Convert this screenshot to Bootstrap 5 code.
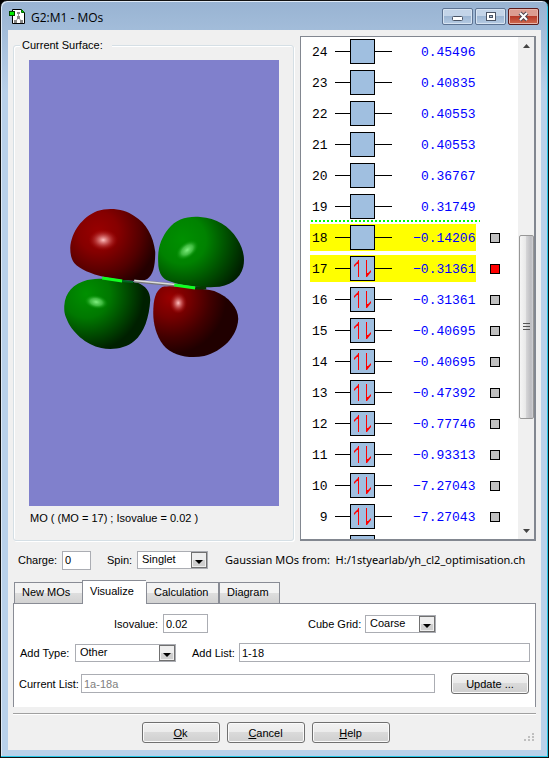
<!DOCTYPE html>
<html lang="en">
<head>
<meta charset="utf-8">
<meta name="viewport" content="width=device-width, initial-scale=1">
<title>G2:M1 - MOs</title>
<link href="https://cdn.jsdelivr.net/npm/bootstrap@5.3.0/dist/css/bootstrap.min.css" rel="stylesheet">
<style>
body{background:#000;font:11px/14px "Liberation Sans",Arial,sans-serif;color:#000;min-height:100vh}
svg{display:block;flex:none}
.win{min-height:100vh;border:1px solid #111;border-radius:7px 7px 0 0;background:linear-gradient(#98b3d2,#b9d1ea 92px);padding:2px 7px 7px;box-shadow:inset -1px -1px #26c6e6,inset 1px 1px #dfeaf6}
.titlebar{height:27px;padding:0 2px 0 1px}
.segoe{font:11px/16px "Noto Sans","Open Sans",sans-serif}
.wtitle{font:12px/16px "Open Sans","Noto Sans",sans-serif;padding:2px 0 0 5px}
.caps{gap:2px}
.cap{width:31px;height:17px;padding:0;border:1px solid #5d7392;border-radius:2px;background:linear-gradient(#c3d4e8 45%,#9db6d3 50%,#b5cbe3);box-shadow:inset 0 0 0 1px #d7e4f2}
.cap.close-x{border-color:#5c1a1a;background:linear-gradient(#dc9c90 45%,#b83a28 50%,#cf6a50);box-shadow:inset 0 0 0 1px #e8b5ab}
.client{background:#f0f0f0;padding:6px 5px 7px}
.upper{gap:6px}
.surface{flex:0 1 282px;border:1px solid #d5dfe5;border-radius:3px;box-shadow:inset 1px 1px #fff,1px 1px #fff;margin-top:2px;padding:0 14px 13px 15px;min-width:0}
.surface legend{float:none;width:auto;font-size:11px;line-height:14px;margin:-7px 0 8px -9px;padding:0 9px 0 2px;background:#f0f0f0}
.view{background:#8080cc;height:446px}
.view svg{width:100%;height:100%}
.caption{margin:5px 0 0 1px}
.levels{flex:1 1 236px;height:505px;border:2px solid #828790;border-width:1px 2px 2px 1px;background:#fff;overflow:hidden}
.rows{padding-left:9px;margin-top:-1px}
.mo{height:31px}
.mo>div{width:166px;height:27px;font:13px/27px "Liberation Mono",monospace}
.mo .num{width:17px;text-align:right;margin-right:8px;padding-top:1px}
.mo .val{color:#00f;text-align:right;flex:1;padding:1px 1px 0 0}
.mo.sel>div{background:#ff0}
.mo button{width:10px;height:10px;padding:0;border:1px solid #000;border-radius:0;background:#c0c0c0;margin-left:14px}
.mo button.on{background:red}
.homo{width:169px;height:2px;margin:-2px 0 0 1px;background:repeating-linear-gradient(90deg,#0f0 0 2px,#fff 2px 4px)}
.sbar{width:16px;background:#f0f0f0;padding:7px 0 6px}
.thumb{height:184px;width:15px;border:1px solid #979797;border-radius:2px;background:linear-gradient(90deg,#f5f5f5,#e9e9e9 42%,#d4d4d6 50%,#bcbcc0 85%,#d0d0d4);margin-top:187px}
.line-in{border:1px solid #abadb3;background:#fff;font-size:11px;line-height:14px;height:19px;padding:0 2px;border-radius:0;color:#000;min-width:0}
.line-in:disabled{color:#808080}
.pick{height:18px;appearance:none;padding:0 18px 2px 4px;background:#fff url("data:image/svg+xml,%3Csvg xmlns='http://www.w3.org/2000/svg' width='16' height='16'%3E%3Crect x='.5' y='.5' width='15' height='15' fill='%23eeeeee' stroke='%23707070'/%3E%3Cpath d='M2 8h12v6H2z' fill='%23cfcfcf'/%3E%3Cpath d='M4 8h8l-4 4z'/%3E%3C/svg%3E") no-repeat right 0 top 0}
.settings{height:20px;margin-top:9px;padding-left:5px}
.lb-charge{width:44px}.lb-spin{width:30px;margin-left:16px}.lb-iso{width:49px;margin-left:94px}.lb-grid{width:57px;margin-left:100px}
.lb-type{width:55px}.lb-list{width:47px;margin-left:16px}.lb-cur{width:62px}
.w-charge{width:29px}.w-pick{width:71px}.w-iso{width:45px}.w-type{width:101px}
.src{flex:1;min-width:0;margin:0 5px 0 17px}
.tabs{margin:10px 0 -1px 1px;height:24px}
.tabs button{height:22px;font-size:11px;line-height:14px;padding:0 0 2px 7px;text-align:left;border:1px solid #898c95;border-right-width:0;border-radius:0;background:linear-gradient(#f3f3f3 48%,#dedede 50%,#d2d2d2);color:#000}
.tabs button.active{height:24px;background:#fff;border-bottom:0;padding-bottom:3px}
.tabs button:last-child{border-right-width:1px}
.t1{width:68px}.t2{width:64px}.t3{width:73px;border-right:1px solid #898c95!important}.t4{width:61px}
.tabpane{background:#fff;border:1px solid #898c95;border-bottom:0;padding:10px 5px 14px}
.frow{height:19px;padding-left:1px}
.frow+.frow{margin-top:10px}
.frow+.frow.last{margin-top:12px;padding:0 1px 0 0}
.push{height:21px;width:78px;font-size:11px;line-height:14px;padding:0;color:#000;border:1px solid #707070;border-radius:3px;background:linear-gradient(#f2f2f2,#ebebeb 48%,#dadada 50%,#cfcfcf);box-shadow:inset 0 0 0 1px #fafafa}
.rule{height:2px;border-top:1px solid #a0a0a0;background:#fff;margin:6px 0 7px}
.actions{gap:7px;padding-right:18px}
.sizegrip{right:0;bottom:0}
</style>
<script src="https://cdn.jsdelivr.net/npm/bootstrap@5.3.0/dist/js/bootstrap.bundle.min.js"></script>
</head>
<body>
<svg width="0" height="0" class="position-absolute" aria-hidden="true">
 <symbol id="empty" viewBox="0 0 57 25"><path d="M0 12.500h57" stroke="#000"/><rect x="15.500" y=".5" width="24" height="24" fill="#a0bfe0" stroke="#000"/></symbol>
 <symbol id="full" viewBox="0 0 57 25"><use href="#empty"/><path d="M23.500 4v17M31.500 4v17" stroke="red"/><path d="M19 11v-2l4-4h1v3h-2zM36 14v2l-4 5h-1v-4h2z" fill="red"/></symbol>
</svg>
<main class="win d-flex flex-column">
 <header class="titlebar d-flex align-items-center">
  <svg width="17" height="17" viewBox="0 0 17 17"><path d="M3.500 1.500h9l3 3v11h-12z" fill="#fff" stroke="#000"/><path d="M12.500 1.500v3h3" fill="#0d0" stroke="#060"/><path d="M9.500 5v5l-3 3M9.500 10l3 3" fill="none" stroke="#999"/><path d="M8 4h3v2H8zM5 12h3v3H5zM11 12h3v3h-3zM8 8h3v3H8z" fill="#888"/><rect x=".5" y="3.500" width="5" height="4" fill="#0e0" stroke="#040"/></svg>
  <h1 class="wtitle flex-grow-1 m-0">G2:M1 - MOs</h1>
  <div class="caps d-flex">
   <button class="cap" aria-label="Minimize"><svg width="29" height="15"><rect x="9.500" y="7.500" width="10" height="4" rx="1" fill="#fff" stroke="#4b5566"/></svg></button>
   <button class="cap" aria-label="Maximize"><svg width="29" height="15"><rect x="10.500" y="3.500" width="9" height="8" fill="#fff" stroke="#4b5566"/><rect x="13.500" y="6.500" width="3" height="2" fill="#a9bdd6" stroke="#4b5566"/></svg></button>
   <button class="cap close-x" aria-label="Close"><svg width="29" height="15"><path d="M11 4l7 7M18 4l-7 7" stroke="#4b4450" stroke-width="4"/><path d="M11 4l7 7M18 4l-7 7" stroke="#fff" stroke-width="2"/></svg></button>
  </div>
 </header>
 <div class="client flex-grow-1">
  <div class="upper d-flex">
   <fieldset class="surface">
    <legend>Current Surface:</legend>
    <div class="view">
     <svg viewBox="29 60 250 446" role="img" aria-label="Molecular orbital 17">
      <defs>
       <radialGradient id="r1" gradientUnits="userSpaceOnUse" cx="98" cy="232" r="66"><stop offset="0" stop-color="#900"/><stop offset=".3" stop-color="#860000"/><stop offset=".65" stop-color="#520000"/><stop offset=".9" stop-color="#240000"/></radialGradient>
       <radialGradient id="r2" gradientUnits="userSpaceOnUse" cx="170" cy="298" r="66"><stop offset="0" stop-color="#900"/><stop offset=".3" stop-color="#740000"/><stop offset=".6" stop-color="#420000"/><stop offset=".85" stop-color="#200000"/></radialGradient>
       <radialGradient id="g1" gradientUnits="userSpaceOnUse" cx="182" cy="240" r="68"><stop offset="0" stop-color="#009000"/><stop offset=".35" stop-color="#008200"/><stop offset=".65" stop-color="#005000"/><stop offset=".95" stop-color="#002000"/></radialGradient>
       <radialGradient id="g2" gradientUnits="userSpaceOnUse" cx="86" cy="294" r="68"><stop offset="0" stop-color="#009000"/><stop offset=".35" stop-color="#007800"/><stop offset=".6" stop-color="#004c00"/><stop offset=".85" stop-color="#002000"/></radialGradient>
       <radialGradient id="hr"><stop offset="0" stop-color="#ffc0c0"/><stop offset=".4" stop-color="#d06060" stop-opacity=".8"/><stop offset="1" stop-color="#a00000" stop-opacity="0"/></radialGradient>
       <radialGradient id="hg"><stop offset="0" stop-color="#80f080"/><stop offset=".5" stop-color="#50c850" stop-opacity=".8"/><stop offset="1" stop-color="#009000" stop-opacity="0"/></radialGradient>
      </defs>
      <path d="M158 263C157 248 161 238 168 229C176 219 187 216 200 217C216 218 229 226 237 239C243 248 245 258 243 267C240 279 229 287 214 287C196 288 178 285 166 280C161 277 158 271 158 263Z" fill="url(#g1)"/>
      <path d="M70 248C71 232 82 217 97 211C109 207 125 209 134 216C146 223 153 236 155 252C155 266 153 275 147 279C139 283 119 280 104 277C91 274 79 269 74 263C71 259 70 254 70 248Z" fill="url(#r1)"/>
      <path d="M64 306C65 292 73 284 87 280C104 277 126 280 138 283C145 286 150 291 150 300C149 317 144 333 134 341C125 349 111 350 101 348C86 345 71 332 66 318C64 313 64 311 64 306Z" fill="url(#g2)"/>
      <path d="M153 313C153 300 155 291 162 287C174 285 199 288 214 291C229 297 238 308 238 319C237 337 222 351 204 356C190 359 172 356 163 345C156 336 153 324 153 313Z" fill="url(#r2)"/>
      <ellipse cx="103" cy="240" rx="15" ry="11" fill="url(#hr)"/><ellipse cx="178" cy="303" rx="9" ry="11" fill="url(#hr)"/>
      <ellipse cx="187" cy="250" rx="13" ry="8" transform="rotate(-38 187 250)" fill="url(#hg)"/><ellipse cx="96" cy="302" rx="12" ry="7" transform="rotate(10 96 302)" fill="url(#hg)"/>
      <path d="M134 281L175 285" stroke="#777" stroke-width="3"/><path d="M134 280.500L175 284.500" stroke="#ddd" stroke-width="1.500"/>
      <path d="M102 278l20 3" stroke="#1f2" stroke-width="3"/><path d="M122 281l11 1" stroke="#062" stroke-width="2"/><path d="M174 285l21 3" stroke="#1f2" stroke-width="3"/><path d="M195 288h11" stroke="#073800" stroke-width="3"/>
     </svg>
    </div>
    <div class="caption">MO ( (MO = 17) ; Isovalue = 0.02 )</div>
   </fieldset>
   <section class="levels d-flex justify-content-between" aria-label="Orbital levels">
    <div class="rows">
     <div class="mo d-flex align-items-center"><div class="d-flex align-items-center"><span class="num">24</span><svg width="57" height="25"><use href="#empty"/></svg><span class="val">0.45496</span></div></div>
     <div class="mo d-flex align-items-center"><div class="d-flex align-items-center"><span class="num">23</span><svg width="57" height="25"><use href="#empty"/></svg><span class="val">0.40835</span></div></div>
     <div class="mo d-flex align-items-center"><div class="d-flex align-items-center"><span class="num">22</span><svg width="57" height="25"><use href="#empty"/></svg><span class="val">0.40553</span></div></div>
     <div class="mo d-flex align-items-center"><div class="d-flex align-items-center"><span class="num">21</span><svg width="57" height="25"><use href="#empty"/></svg><span class="val">0.40553</span></div></div>
     <div class="mo d-flex align-items-center"><div class="d-flex align-items-center"><span class="num">20</span><svg width="57" height="25"><use href="#empty"/></svg><span class="val">0.36767</span></div></div>
     <div class="mo d-flex align-items-center"><div class="d-flex align-items-center"><span class="num">19</span><svg width="57" height="25"><use href="#empty"/></svg><span class="val">0.31749</span></div></div>
     <div class="homo"></div>
     <div class="mo sel d-flex align-items-center"><div class="d-flex align-items-center"><span class="num">18</span><svg width="57" height="25"><use href="#empty"/></svg><span class="val">−0.14206</span></div><button aria-label="Show surface 18"></button></div>
     <div class="mo sel d-flex align-items-center"><div class="d-flex align-items-center"><span class="num">17</span><svg width="57" height="25"><use href="#full"/></svg><span class="val">−0.31361</span></div><button class="on" aria-label="Show surface 17"></button></div>
     <div class="mo d-flex align-items-center"><div class="d-flex align-items-center"><span class="num">16</span><svg width="57" height="25"><use href="#full"/></svg><span class="val">−0.31361</span></div><button aria-label="Show surface 16"></button></div>
     <div class="mo d-flex align-items-center"><div class="d-flex align-items-center"><span class="num">15</span><svg width="57" height="25"><use href="#full"/></svg><span class="val">−0.40695</span></div><button aria-label="Show surface 15"></button></div>
     <div class="mo d-flex align-items-center"><div class="d-flex align-items-center"><span class="num">14</span><svg width="57" height="25"><use href="#full"/></svg><span class="val">−0.40695</span></div><button aria-label="Show surface 14"></button></div>
     <div class="mo d-flex align-items-center"><div class="d-flex align-items-center"><span class="num">13</span><svg width="57" height="25"><use href="#full"/></svg><span class="val">−0.47392</span></div><button aria-label="Show surface 13"></button></div>
     <div class="mo d-flex align-items-center"><div class="d-flex align-items-center"><span class="num">12</span><svg width="57" height="25"><use href="#full"/></svg><span class="val">−0.77746</span></div><button aria-label="Show surface 12"></button></div>
     <div class="mo d-flex align-items-center"><div class="d-flex align-items-center"><span class="num">11</span><svg width="57" height="25"><use href="#full"/></svg><span class="val">−0.93313</span></div><button aria-label="Show surface 11"></button></div>
     <div class="mo d-flex align-items-center"><div class="d-flex align-items-center"><span class="num">10</span><svg width="57" height="25"><use href="#full"/></svg><span class="val">−7.27043</span></div><button aria-label="Show surface 10"></button></div>
     <div class="mo d-flex align-items-center"><div class="d-flex align-items-center"><span class="num">9</span><svg width="57" height="25"><use href="#full"/></svg><span class="val">−7.27043</span></div><button aria-label="Show surface 9"></button></div>
     <div class="mo d-flex align-items-center"><div class="d-flex align-items-center"><span class="num"></span><svg width="57" height="25"><use href="#full"/></svg></div></div>
    </div>
    <div class="sbar d-flex flex-column align-items-center">
     <svg width="7" height="4"><path d="M0 4h7L3.500 0z" fill="#444"/></svg>
     <div class="thumb d-flex align-items-center justify-content-center"><svg width="7" height="8"><path d="M0 .5h7M0 3.500h7M0 6.500h7" stroke="#555"/></svg></div>
     <svg class="mt-auto" width="7" height="4"><path d="M0 0h7L3.500 4z" fill="#444"/></svg>
    </div>
   </section>
  </div>
  <div class="settings d-flex align-items-center">
   <label class="lb-charge" for="charge">Charge:</label><input id="charge" class="line-in w-charge" value="0">
   <label class="lb-spin" for="spin">Spin:</label><select id="spin" class="line-in pick w-pick"><option>Singlet</option></select>
   <div class="segoe src text-nowrap overflow-hidden">Gaussian MOs from:&nbsp; H:/1styearlab/yh_cl2_optimisation.ch</div>
  </div>
  <div class="tabs d-flex align-items-end position-relative" role="tablist">
   <button role="tab" class="t1">New MOs</button><button role="tab" class="t2 active" aria-selected="true">Visualize</button><button role="tab" class="t3">Calculation</button><button role="tab" class="t4">Diagram</button>
  </div>
  <div class="tabpane" role="tabpanel">
   <div class="frow d-flex align-items-center">
    <label class="lb-iso" for="iso">Isovalue:</label><input id="iso" class="line-in w-iso" value="0.02">
    <label class="lb-grid" for="grid">Cube Grid:</label><select id="grid" class="line-in pick w-pick"><option>Coarse</option></select>
   </div>
   <div class="frow d-flex align-items-center">
    <label class="lb-type" for="type">Add Type:</label><select id="type" class="line-in pick w-type"><option>Other</option></select>
    <label class="lb-list" for="list">Add List:</label><input id="list" class="line-in flex-grow-1" value="1-18">
   </div>
   <div class="frow last d-flex align-items-center">
    <label class="lb-cur" for="cur">Current List:</label><input id="cur" class="line-in flex-grow-1 me-3" value="1a-18a" disabled>
    <button class="push">Update ...</button>
   </div>
  </div>
  <div class="rule"></div>
  <footer class="actions d-flex justify-content-center position-relative">
   <button class="push"><u>O</u>k</button><button class="push"><u>C</u>ancel</button><button class="push"><u>H</u>elp</button>
   <svg class="sizegrip position-absolute" width="12" height="10"><path d="M8 0h2v2H8zM4 3h2v2H4zM8 3h2v2H8zM0 6h2v2H0zM4 6h2v2H4zM8 6h2v2H8z" fill="#bfbfbf"/></svg>
  </footer>
 </div>
</main>
</body>
</html>
